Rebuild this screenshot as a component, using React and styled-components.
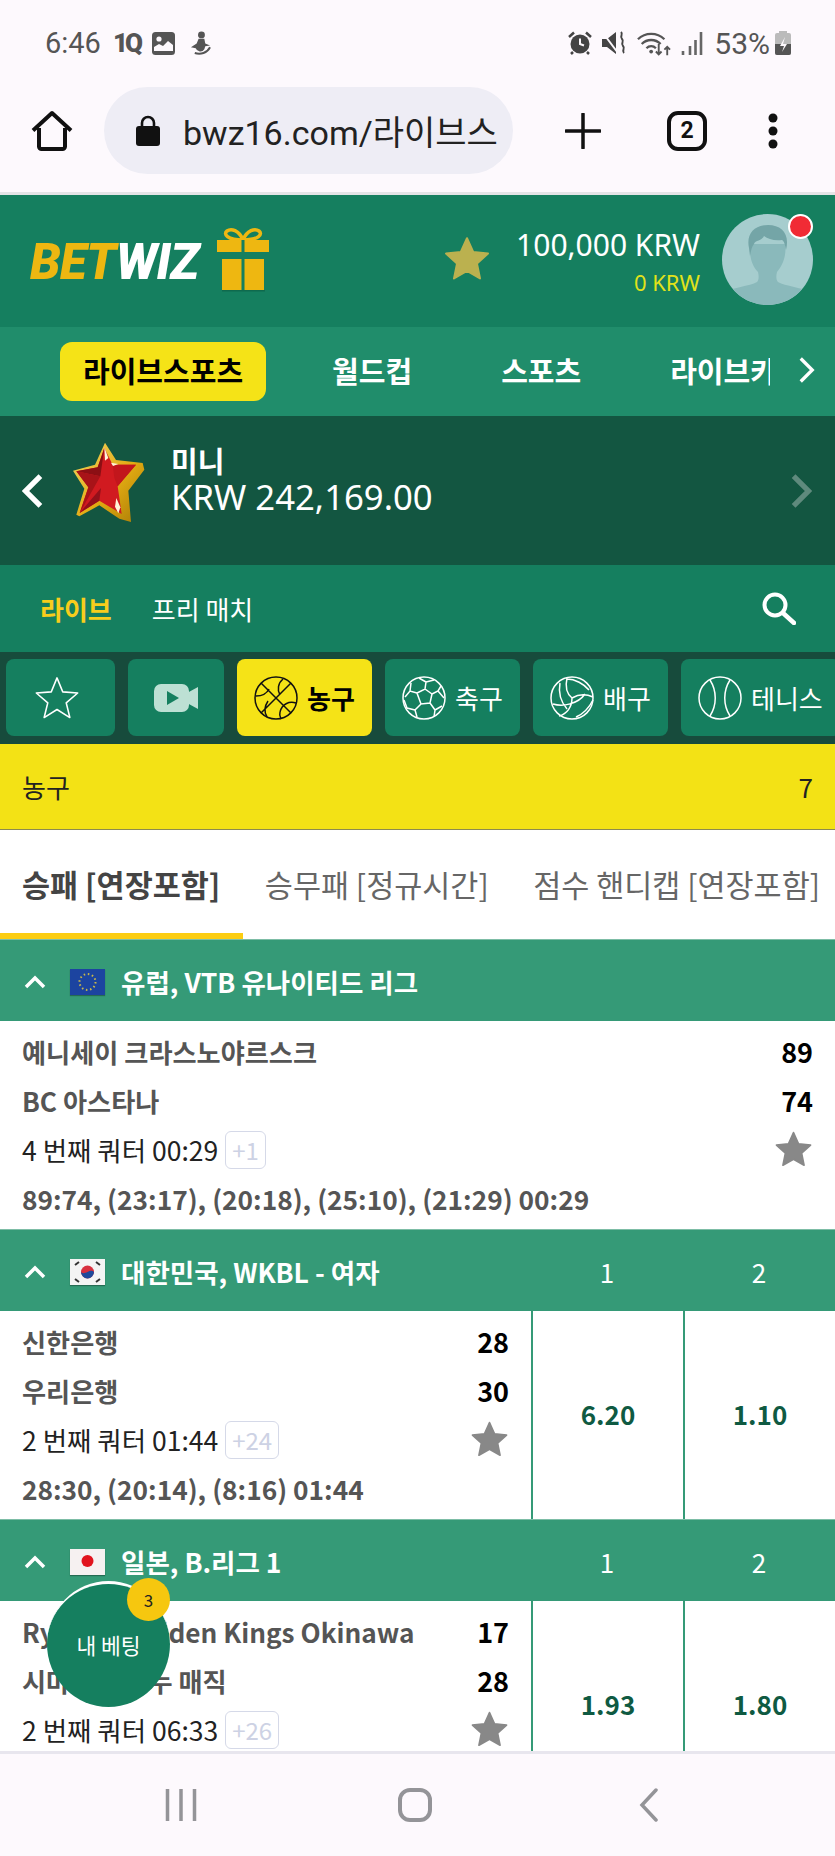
import React from 'react'
import styled, { createGlobalStyle } from 'styled-components'

const GlobalStyle = createGlobalStyle`
  html, body {
    margin: 0;
    padding: 0;
    background: #fff;
  }
  * {
    box-sizing: border-box;
  }
`;

const Phone = styled.div`
  width: 835px;
  height: 1856px;
  display: flex;
  flex-direction: column;
  overflow: hidden;
  position: relative;
  font-family: "Noto Sans CJK KR", "Noto Sans", sans-serif;
`;

/* android + chrome */
const Chrome = styled.div`
  height: 195px;
  flex: none;
  background: #fdf9fd;
  border-bottom: 3px solid #e3e4e6;
`;

const StatusBar = styled.div`
  height: 87px;
  padding: 0 44px 0 45px;
  display: flex;
  align-items: flex-start;
  justify-content: space-between;
  color: #555;
  font-family: Roboto, sans-serif;
`;

const StatusGroup = styled.div`
  display: flex;
  align-items: center;
  height: 86px;
  gap: ${(p) => p.$gap || 8}px;
`;

const Clock = styled.span`
  font-size: 29px;
`;

const Percent = styled.span`
  font-size: 30px;
  margin: 0 -5px 0 1px;
`;

const OneQ = styled.span`
  font-size: 26px;
  font-weight: 900;
  letter-spacing: -3px;
  font-family: Roboto, sans-serif;
  width: 28px;
  margin-right: -1px;
`;

const BrowserBar = styled.div`
  height: 87px;
  display: flex;
  align-items: center;
  position: relative;
`;

const HomeSlot = styled.div`
  width: 104px;
  display: flex;
  justify-content: center;
`;

const UrlPill = styled.div`
  width: 409px;
  height: 87px;
  border-radius: 44px;
  background: #eeedf5;
  display: flex;
  align-items: center;
  padding-left: 32px;
  gap: 23px;
  overflow: hidden;
`;

const UrlText = styled.span`
  font-family: Roboto, "Noto Sans CJK KR", sans-serif;
  font-size: 34px;
  color: #222;
  white-space: nowrap;
`;

const BrowserActions = styled.div`
  flex: 1;
  display: flex;
  align-items: center;
  padding-left: 52px;
`;

const TabCount = styled.div`
  width: 40px;
  height: 40px;
  margin: 0 59px 0 66px;
  border: 4px solid #111;
  border-radius: 11px;
  display: flex;
  align-items: center;
  justify-content: center;
  font: 700 23px Roboto, sans-serif;
  color: #111;
`;

/* site header */
const Header = styled.div`
  height: 132px;
  flex: none;
  background: #157f5f;
  display: flex;
  align-items: center;
  padding: 0 22px 4px 30px;
`;

const Logo = styled.div`
  font: italic 900 49px Roboto, sans-serif;
  letter-spacing: -0.7px;
  color: #fff;
  margin-right: 17px;
  margin-top: 6px;
  span {
    color: #eeb711;
  }
`;

const Spacer = styled.div`
  flex: 1;
`;

const Balance = styled.div`
  display: flex;
  flex-direction: column;
  align-items: flex-end;
  margin: 9px 22px 0 25px;
`;

const BalanceMain = styled.div`
  font: 400 30px/37px "Noto Sans", sans-serif;
  color: #fff;
`;

const BalanceSub = styled.div`
  font: 400 22px/38px "Noto Sans", sans-serif;
  color: #e1e21a;
`;

const AvatarWrap = styled.div`
  position: relative;
  width: 91px;
  height: 91px;
  flex: none;
`;

const Dot = styled.div`
  position: absolute;
  top: 0;
  right: 0;
  width: 25px;
  height: 25px;
  border-radius: 50%;
  background: #f12b35;
  border: 2px solid #fff;
`;

const MainNav = styled.div`
  height: 89px;
  flex: none;
  background: #208d6b;
  display: flex;
  align-items: center;
  padding-left: 60px;
  gap: 43px;
  position: relative;
  overflow: hidden;
`;

const NavItem = styled.div`
  height: 59px;
  flex: none;
  padding: 0 23px 3px;
  border-radius: 12px;
  display: flex;
  align-items: center;
  font-size: 29px;
  font-weight: 700;
  white-space: nowrap;
  color: ${(p) => (p.$active ? '#000' : '#fff')};
  background: ${(p) => (p.$active ? '#f5e317' : 'transparent')};
`;

const NavNext = styled.div`
  position: absolute;
  right: 0;
  top: 0;
  bottom: 0;
  width: 65px;
  background: #208d6b;
  display: flex;
  align-items: center;
  justify-content: center;
  padding-left: 8px;
  padding-bottom: 3px;
`;

const Promo = styled.div`
  height: 149px;
  flex: none;
  background: #135641;
  display: flex;
  align-items: flex-start;
  padding: 0 23px 0 22px;
`;

const PromoBadge = styled.div`
  margin: 26px 24px 0 28px;
  display: flex;
`;

const PromoText = styled.div`
  color: #fff;
  margin-top: 25px;
`;

const PromoName = styled.div`
  font-size: 29px;
  line-height: 38px;
  font-weight: 700;
`;

const PromoAmount = styled.div`
  font: 400 34.7px/36px "Noto Sans", sans-serif;
`;

const PromoArrow = styled.div`
  height: 76px;
  margin-top: 37px;
  display: flex;
  align-items: center;
`;

const SubNav = styled.div`
  height: 87px;
  flex: none;
  background: #157f5f;
  display: flex;
  align-items: center;
  padding: 0 39px 0 40px;
  gap: 40px;
`;

const SubLink = styled.div`
  font-size: 26px;
  font-weight: ${(p) => (p.$active ? 700 : 400)};
  color: ${(p) => (p.$active ? '#f7cd1c' : '#fff')};
`;

const SportBar = styled.div`
  height: 92px;
  flex: none;
  background: #174b3c;
  display: flex;
  align-items: center;
  gap: 13px;
  padding: 0 0 1px 6px;
  overflow: hidden;
`;

const SportTab = styled.div`
  width: ${(p) => p.$w}px;
  height: 77px;
  flex: none;
  border-radius: 8px;
  background: ${(p) => (p.$active ? '#f5e317' : '#157f5f')};
  color: ${(p) => (p.$active ? '#000' : '#fff')};
  font-size: 26px;
  font-weight: ${(p) => (p.$active ? 700 : 400)};
  display: flex;
  align-items: center;
  justify-content: ${(p) => (p.$center ? 'center' : 'flex-start')};
  padding-left: ${(p) => (p.$center ? 0 : 17)}px;
  padding-right: ${(p) => p.$pr || 0}px;
  gap: 9px;
  white-space: nowrap;
`;

const SportTitle = styled.div`
  height: 86px;
  flex: none;
  background: #f3e215;
  border-bottom: 1px solid #8c8a4e;
  display: flex;
  align-items: center;
  justify-content: space-between;
  padding: 0 22px;
  font-size: 26px;
  color: #222;
`;

const MarketTabs = styled.div`
  height: 109px;
  flex: none;
  background: #fff;
  display: flex;
  padding-left: 22px;
  gap: 44.5px;
  white-space: nowrap;
  position: relative;
`;

const MarketTab = styled.div`
  height: 109px;
  padding-top: 34px;
  font-size: 30.5px;
  line-height: 40px;
  color: ${(p) => (p.$active ? '#444' : '#666')};
  font-weight: ${(p) => (p.$active ? 700 : 400)};
`;

const MarketLine = styled.div`
  position: absolute;
  left: 0;
  bottom: 0;
  width: 243px;
  height: 6px;
  background: #fccd12;
`;

const Scroll = styled.div`
  flex: 1;
  min-height: 0;
  overflow: hidden;
  background: #fff;
`;

const LeagueHead = styled.div`
  height: 82px;
  background: #359a77;
  border-top: 1px solid #7dbda6;
  display: flex;
  align-items: center;
  padding: 2px 0 0 24px;
  color: #fff;
  font-size: 26.5px;
  font-weight: 700;
`;

const LeagueName = styled.div`
  flex: 1;
  margin-left: 16px;
`;

const FlagBox = styled.div`
  width: 35px;
  height: 26px;
  margin-left: 24px;
  flex: none;
  box-shadow: 0 1px 1px rgba(0, 0, 0, 0.3);
  display: flex;
`;

const ColLabel = styled.div`
  width: 152px;
  text-align: center;
  font-weight: 400;
  font-size: 26px;
`;

const Match = styled.div`
  height: 208px;
  display: flex;
  background: #fff;
`;

const MatchInfo = styled.div`
  flex: 1;
  padding: 6px 22px 0;
  display: flex;
  flex-direction: column;
`;

const Line = styled.div`
  height: 49px;
  display: flex;
  align-items: center;
  justify-content: space-between;
  white-space: nowrap;
`;

const Team = styled.span`
  font-size: 26.2px;
  font-weight: 700;
  color: #555;
`;

const Score = styled.span`
  font-size: 27px;
  font-weight: 700;
  color: #000;
`;

const Period = styled.span`
  font-size: 26.500px;
  color: #222;
  display: flex;
  align-items: center;
  gap: 7px;
`;

const More = styled.span`
  height: 38px;
  padding: 0 6px;
  border: 1.5px solid #d5d9e8;
  border-radius: 6px;
  color: #cdd2e4;
  font-size: 24px;
  display: flex;
  align-items: center;
`;

const Result = styled.span`
  font-size: 26.3px;
  font-weight: 700;
  color: #555;
`;

const OddCell = styled.div`
  width: 152px;
  flex: none;
  border-left: 2px solid #359a77;
  display: flex;
  align-items: center;
  justify-content: center;
  padding-bottom: 3px;
  font-size: 26px;
  font-weight: 700;
  color: #0f5a42;
`;

const BottomNav = styled.div`
  height: 105px;
  flex: none;
  background: #fdf9fd;
  border-top: 3px solid #e8e6ee;
  display: grid;
  grid-template-columns: repeat(3, 234px);
  justify-items: center;
  align-items: center;
  padding-left: 64px;
`;

const BetButton = styled.div`
  position: absolute;
  left: 47px;
  top: 1581px;
  width: 123px;
  height: 126px;
  border-radius: 50%;
  background: #157f5f;
  border-top: 3px solid #fff;
  color: #fff;
  font-size: 21.500px;
  display: flex;
  align-items: center;
  justify-content: center;
  padding-bottom: 2px;
`;

const BetCount = styled.div`
  position: absolute;
  right: 0;
  top: -6px;
  width: 43px;
  height: 43px;
  border-radius: 50%;
  background: #f6c70f;
  color: #222;
  font-size: 17px;
  display: flex;
  align-items: center;
  justify-content: center;
`;

const StarPath = "M12 1.6l3.1 6.9 7.4.8-5.5 5 1.5 7.4L12 18l-6.5 3.7L7 14.3l-5.5-5 7.4-.8z";

const Star = ({ size = 39, color = '#888' }) => (
  <svg width={size} height={size} viewBox="0 0 24 24">
    <path d={StarPath} fill={color} stroke={color} strokeWidth="1" strokeLinejoin="round" />
  </svg>
);

const Chevron = ({ dir = 'right', color = '#fff', w = 20, h = 34, sw = 5 }) => (
  <svg width={w} height={h} viewBox="0 0 20 34">
    <path
      d={dir === 'right' ? 'M3 3l14 14L3 31' : 'M17 3L3 17l14 14'}
      fill="none"
      stroke={color}
      strokeWidth={sw}
    />
  </svg>
);

const HomeIcon = () => (
  <svg width="42" height="42" viewBox="0 0 42 42">
    <path d="M2 20.5L21 3l19 17.5M8 18v18.5a2.5 2.5 0 0 0 2.5 2.5h21a2.5 2.5 0 0 0 2.5-2.5V18" fill="none" stroke="#111" strokeWidth="4" strokeLinejoin="round" />
  </svg>
);

const LockIcon = () => (
  <svg width="24" height="32" viewBox="0 0 24 32">
    <path d="M6 13V8a6 6 0 0 1 12 0v5" fill="none" stroke="#111" strokeWidth="2.6" />
    <rect x="0" y="11" width="24" height="20" rx="3" fill="#111" />
  </svg>
);

const PlusIcon = () => (
  <svg width="36" height="36" viewBox="0 0 36 36">
    <path d="M18 1v34M1 18h34" stroke="#111" strokeWidth="3.5" strokeLinecap="round" />
  </svg>
);

const DotsIcon = () => (
  <svg width="14" height="36" viewBox="0 0 14 36">
    <circle cx="7" cy="5" r="4.5" fill="#111" />
    <circle cx="7" cy="18" r="4.5" fill="#111" />
    <circle cx="7" cy="31" r="4.5" fill="#111" />
  </svg>
);

const GalleryIcon = () => (
  <svg width="23" height="23" viewBox="0 0 23 23">
    <rect x="0" y="0" width="23" height="23" rx="3.5" fill="#555" />
    <circle cx="7" cy="7" r="2.6" fill="#fdf9fd" />
    <path d="M2 19v-4l5-3 4 2 5-5 5 4v6z" fill="#fdf9fd" />
  </svg>
);

const FigureIcon = () => (
  <svg width="21" height="24" viewBox="0 0 22 25" style={{ marginLeft: 3 }}>
    <circle cx="12" cy="4" r="3.6" fill="#555" />
    <path d="M9 8h6l1 5 5 2-5 1-1 3a5 5 0 0 1-9-1l-5-1 6-4z" fill="#555" />
    <path d="M5 23c6 2 13 0 16-6" fill="none" stroke="#555" strokeWidth="2" />
  </svg>
);

const AlarmIcon = () => (
  <svg width="24" height="24" viewBox="0 0 24 24">
    <circle cx="12" cy="13" r="9.5" fill="#444" />
    <path d="M12 7.5V13l4 1.5" fill="none" stroke="#fdf9fd" strokeWidth="2" />
    <path d="M1 6l5-4.5M23 6l-5-4.5M5 21l-2 2M19 21l2 2" stroke="#444" strokeWidth="2.5" />
  </svg>
);

const MuteIcon = () => (
  <svg width="25" height="24" viewBox="0 0 25 24">
    <path d="M0 8h5l9-7v22l-9-7H0z" fill="#444" />
    <path d="M1 2l15 20" stroke="#fdf9fd" strokeWidth="2" />
    <path d="M19 1c3 3-2 4 1 7s-2 4 1 7-2 4 1 7" fill="none" stroke="#444" strokeWidth="2" />
  </svg>
);

const WifiIcon = () => (
  <svg width="34" height="27" viewBox="0 0 36 27">
    <path d="M1 9a20 20 0 0 1 28 0M5 14a14 14 0 0 1 20 0M10 18.500a7 7 0 0 1 10 0" fill="none" stroke="#555" strokeWidth="2.4" />
    <circle cx="15" cy="22" r="2" fill="#555" />
    <path d="M23 14v11m-3-3l3 3 3-3M32 26V17m-3 3l3-3 3 3" fill="none" stroke="#555" strokeWidth="2" />
  </svg>
);

const SignalIcon = () => (
  <svg width="22" height="23" viewBox="0 0 22 23">
    <path d="M2 19v4M9 14v9M14.500 8v15M20 0v23" stroke="#666" strokeWidth="2.6" />
  </svg>
);

const BatteryIcon = () => (
  <svg width="16" height="24" viewBox="0 0 16 24">
    <rect x="4" y="0" width="8" height="3" fill="#bbb" />
    <rect x="0" y="2" width="16" height="22" rx="2" fill="#bbb" />
    <path d="M0 13h16v9a2 2 0 0 1-2 2H2a2 2 0 0 1-2-2z" fill="#555" />
    <path d="M10 6l-5 9h4l-2 6 5-8H8z" fill="#fdf9fd" />
  </svg>
);

const GiftIcon = () => (
  <svg width="54" height="65" viewBox="0 0 54 65">
    <path d="M27 13C23 3 15 1 11 4s0 9 16 9c16 0 20-6 16-9s-12-1-16 9z" fill="none" stroke="#eeb711" strokeWidth="3.500" />
    <rect x="1" y="13" width="52" height="12" fill="#eeb711" />
    <rect x="6" y="32" width="19.500" height="31" fill="#eeb711" />
    <rect x="28.500" y="32" width="19.500" height="31" fill="#eeb711" />
    <rect x="25.500" y="13" width="3" height="12" fill="#157f5f" />
    <rect x="6" y="63" width="43" height="1.500" fill="#0f6a4e" />
  </svg>
);

const AvatarIcon = () => (
  <svg width="91" height="91" viewBox="0 0 91 91">
    <defs>
      <clipPath id="avatarClip">
        <circle cx="45.500" cy="45.500" r="45.500" />
      </clipPath>
    </defs>
    <g clipPath="url(#avatarClip)">
      <rect width="91" height="91" fill="#a6cdce" />
      <path d="M0 78C10 74 28 72 35 68 37 66 37 62 36 58 30 52 27 42 28 30L63 30C65 42 60 52 55 58 54 62 54 66 56 68 63 72 80 74 91 78V91H0Z" fill="#8ab9bb" />
      <path d="M27 34C24 20 32 11 46 11 60 11 68 20 64 36 63 30 62 27 60 26 52 27 46 25 42 22 40 27 33 26 32 30 30 32 29 36 28 42Z" fill="#74a5a7" />
    </g>
  </svg>
);

const RedStar = () => (
  <svg width="75" height="82" viewBox="213 32 225 246">
    <defs>
      <linearGradient id="goldEdge" x1="0" y1="0" x2="1" y2="1">
        <stop offset="0" stopColor="#f3d766" />
        <stop offset="0.55" stopColor="#e2ab12" />
        <stop offset="1" stopColor="#a87a06" />
      </linearGradient>
    </defs>
    <path d="M312 34L345 86 425 95 430 115 382 178 390 272 355 262 295 222 235 255 226 250 250 172 216 118 282 100Z" fill="url(#goldEdge)" />
    <path d="M310 50L335 100 405 100 350 165 362 248 295 208 236 245 262 168 226 120 290 108Z" fill="#d11a20" />
    <path d="M310 50L290 108 226 120 298 135Z" fill="#8c0f14" />
    <path d="M226 120L262 168 236 245 298 135Z" fill="#a81318" />
    <path d="M236 245L295 208 300 170Z" fill="#94101a" />
    <path d="M405 100L335 100 340 140 350 165Z" fill="#c2161c" />
    <path d="M310 48L322 80 312 88Z" fill="#fff5d8" />
    <path d="M330 94L352 98 336 104Z" fill="#fff5d8" />
    <path d="M346 200L358 228 352 246 342 226Z" fill="#fff5d8" />
  </svg>
);

const SearchIcon = () => (
  <svg width="34" height="33" viewBox="0 0 34 33">
    <circle cx="13" cy="13" r="10.500" fill="none" stroke="#fff" strokeWidth="4" />
    <path d="M21 21l11 10" stroke="#fff" strokeWidth="4.500" strokeLinecap="round" />
  </svg>
);

const OutlineStar = () => (
  <svg width="46" height="46" viewBox="0 0 24 24">
    <path d="M12 1.500l3 7.300 7.800.6-6 5.100 1.900 7.700L12 18l-6.700 4.200 1.900-7.700-6-5.100 7.800-.6z" fill="none" stroke="#fff" strokeWidth="0.800" strokeLinejoin="round" />
  </svg>
);

const VideoIcon = () => (
  <svg width="44" height="28" viewBox="0 0 44 28">
    <rect x="0" y="0" width="35" height="28" rx="7" fill="#bde0d4" />
    <path d="M33 9l11-6v22l-11-6z" fill="#bde0d4" />
    <path d="M13 7l12 7-12 7z" fill="#157f5f" />
  </svg>
);

const Basketball = () => (
  <svg width="44" height="44" viewBox="0 0 44 44" fill="none" stroke="#111" strokeWidth="1.500">
    <circle cx="22" cy="22" r="21" />
    <path d="M7 7l30 30M37 7L7 37M2 20c6 0 11-3 13-7M29 3c-5 4-6 11-3 16M42 27c-7-2-14 1-16 9-1 3 0 5 1 7M13 41c-3-5-3-10 1-16" />
  </svg>
);

const Soccer = () => (
  <svg width="44" height="44" viewBox="0 0 44 44" fill="none" stroke="#fff" strokeWidth="1.500">
    <circle cx="22" cy="22" r="21" />
    <path d="M15 17l8-4 7 5-2 9-9 1zM23 13l1-7-7-4M24 6l8-2M30 18l6-3 3-5M36 15l6 7M28 27l5 7-1 7M33 34l7-4M19 28l-6 6 2 7M13 34l-8-2-3-8M15 17l-7-2-5 6M8 15l1-8" />
  </svg>
);

const Volleyball = () => (
  <svg width="44" height="44" viewBox="0 0 44 44" fill="none" stroke="#fff" strokeWidth="1.500">
    <circle cx="22" cy="22" r="21" />
    <path d="M22 22c-5-4-7-11-5-20M22 22c7-4 14-4 21-1M22 22c0 9-5 16-13 18M17 3c8 0 17 5 22 11M10 7c-2 11 1 19 7 26M3 28c10 3 25 0 32-10M43 24c-4 8-10 14-17 17" />
  </svg>
);

const Tennis = () => (
  <svg width="44" height="44" viewBox="0 0 44 44" fill="none" stroke="#fff" strokeWidth="1.500">
    <circle cx="22" cy="22" r="21" />
    <path d="M12 4c7 11 7 25 0 36M32 4c-7 11-7 25 0 36" />
  </svg>
);

const EuFlag = () => (
  <svg width="35" height="26" viewBox="0 0 35 26">
    <rect width="35" height="26" fill="#1c44a0" />
    <circle cx="17.500" cy="13" r="8" fill="none" stroke="#c9b84a" strokeWidth="2" strokeDasharray="1.500 2.700" />
  </svg>
);

const KoreaFlag = () => (
  <svg width="35" height="26" viewBox="0 0 35 26">
    <rect width="35" height="26" fill="#f4f4f4" />
    <circle cx="17.500" cy="13" r="6.500" fill="#d8303f" />
    <path d="M11 13a6.500 6.500 0 0 0 13 0c-2-2-4-1-6.500 0s-4.500 2-6.500 0z" fill="#1f4a9c" />
    <path d="M5 6l4-3M26 3l4 3M5 20l4 3M26 23l4-3" stroke="#333" strokeWidth="2" />
  </svg>
);

const JapanFlag = () => (
  <svg width="35" height="26" viewBox="0 0 35 26">
    <rect width="35" height="26" fill="#f6f1f1" />
    <circle cx="17.500" cy="12" r="6" fill="#e1141e" />
  </svg>
);

const MenuBars = () => (
  <svg width="32" height="32" viewBox="0 0 32 32">
    <path d="M2.500 0v32M16 0v32M29.500 0v32" stroke="#949498" strokeWidth="3.500" strokeLinecap="round" />
  </svg>
);

const HomeSquare = () => (
  <svg width="34" height="34" viewBox="0 0 34 34">
    <rect x="2" y="2" width="30" height="30" rx="10" fill="none" stroke="#949498" strokeWidth="4" />
  </svg>
);

const BackArrow = () => (
  <svg width="20" height="34" viewBox="0 0 20 34">
    <path d="M17 2L3 17l14 15" fill="none" stroke="#949498" strokeWidth="3.500" strokeLinecap="round" />
  </svg>
);

const ChevronUp = () => (
  <svg width="22" height="14" viewBox="0 0 22 14">
    <path d="M2 12l9-9 9 9" fill="none" stroke="#fff" strokeWidth="3.500" />
  </svg>
);

const matches = [
  {
    league: '유럽, VTB 유나이티드 리그',
    flag: <EuFlag />,
    home: '예니세이 크라스노야르스크',
    away: 'BC 아스타나',
    homeScore: 89,
    awayScore: 74,
    period: '4 번째 쿼터 00:29',
    more: '+1',
    result: '89:74, (23:17), (20:18), (25:10), (21:29) 00:29',
  },
  {
    league: '대한민국, WKBL - 여자',
    flag: <KoreaFlag />,
    home: '신한은행',
    away: '우리은행',
    homeScore: 28,
    awayScore: 30,
    period: '2 번째 쿼터 01:44',
    more: '+24',
    result: '28:30, (20:14), (8:16) 01:44',
    odds: ['6.20', '1.10'],
  },
  {
    league: '일본, B.리그 1',
    flag: <JapanFlag />,
    home: 'Ryukyu Golden Kings Okinawa',
    away: '시마네 스사누 매직',
    homeScore: 17,
    awayScore: 28,
    period: '2 번째 쿼터 06:33',
    more: '+26',
    odds: ['1.93', '1.80'],
  },
];

const App = () => {
  return (
    <Phone>
      <GlobalStyle />
      <Chrome>
        <StatusBar>
          <StatusGroup $gap={12}>
            <Clock>6:46</Clock>
            <OneQ>1Q</OneQ>
            <GalleryIcon />
            <FigureIcon />
          </StatusGroup>
          <StatusGroup $gap={10}>
            <AlarmIcon />
            <MuteIcon />
            <WifiIcon />
            <SignalIcon />
            <Percent>53%</Percent>
            <BatteryIcon />
          </StatusGroup>
        </StatusBar>
        <BrowserBar>
          <HomeSlot>
            <HomeIcon />
          </HomeSlot>
          <UrlPill>
            <LockIcon />
            <UrlText>bwz16.com/라이브스</UrlText>
          </UrlPill>
          <BrowserActions>
            <PlusIcon />
            <TabCount>2</TabCount>
            <DotsIcon />
          </BrowserActions>
        </BrowserBar>
      </Chrome>

      <Header>
        <Logo>
          <span>BET</span>WIZ
        </Logo>
        <GiftIcon />
        <Spacer />
        <Star size={48} color="#bbb14f" />
        <Balance>
          <BalanceMain>100,000 KRW</BalanceMain>
          <BalanceSub>0 KRW</BalanceSub>
        </Balance>
        <AvatarWrap>
          <AvatarIcon />
          <Dot />
        </AvatarWrap>
      </Header>

      <MainNav>
        <NavItem $active>라이브스포츠</NavItem>
        <NavItem>월드컵</NavItem>
        <NavItem>스포츠</NavItem>
        <NavItem>라이브카지노</NavItem>
        <NavNext>
          <Chevron w={17} h={28} sw={4} />
        </NavNext>
      </MainNav>

      <Promo>
        <PromoArrow>
          <Chevron dir="left" w={22} h={36} />
        </PromoArrow>
        <PromoBadge>
          <RedStar />
        </PromoBadge>
        <PromoText>
          <PromoName>미니</PromoName>
          <PromoAmount>KRW 242,169.00</PromoAmount>
        </PromoText>
        <Spacer />
        <PromoArrow>
          <Chevron color="#5f8a7d" w={22} h={36} />
        </PromoArrow>
      </Promo>

      <SubNav>
        <SubLink $active>라이브</SubLink>
        <SubLink>프리 매치</SubLink>
        <Spacer />
        <SearchIcon />
      </SubNav>

      <SportBar>
        <SportTab $w={109} $center $pr={8}><OutlineStar /></SportTab>
        <SportTab $w={96} $center><VideoIcon /></SportTab>
        <SportTab $w={135} $active><Basketball />농구</SportTab>
        <SportTab $w={135}><Soccer />축구</SportTab>
        <SportTab $w={135}><Volleyball />배구</SportTab>
        <SportTab $w={160}><Tennis />테니스</SportTab>
      </SportBar>

      <SportTitle>
        <span>농구</span>
        <span>7</span>
      </SportTitle>

      <MarketTabs>
        <MarketTab $active>승패 [연장포함]</MarketTab>
        <MarketTab>승무패 [정규시간]</MarketTab>
        <MarketTab>점수 핸디캡 [연장포함]</MarketTab>
        <MarketLine />
      </MarketTabs>

      <Scroll>
        {matches.map((m) => (
          <div key={m.league}>
            <LeagueHead>
              <ChevronUp />
              <FlagBox>{m.flag}</FlagBox>
              <LeagueName>{m.league}</LeagueName>
              {m.odds && <ColLabel>1</ColLabel>}
              {m.odds && <ColLabel>2</ColLabel>}
            </LeagueHead>
            <Match>
              <MatchInfo>
                <Line>
                  <Team>{m.home}</Team>
                  <Score>{m.homeScore}</Score>
                </Line>
                <Line>
                  <Team>{m.away}</Team>
                  <Score>{m.awayScore}</Score>
                </Line>
                <Line>
                  <Period>
                    {m.period}
                    <More>{m.more}</More>
                  </Period>
                  <Star />
                </Line>
                {m.result && (
                  <Line>
                    <Result>{m.result}</Result>
                  </Line>
                )}
              </MatchInfo>
              {m.odds && <OddCell>{m.odds[0]}</OddCell>}
              {m.odds && <OddCell>{m.odds[1]}</OddCell>}
            </Match>
          </div>
        ))}
      </Scroll>

      <BottomNav>
        <MenuBars />
        <HomeSquare />
        <BackArrow />
      </BottomNav>

      <BetButton>
        내 베팅
        <BetCount>3</BetCount>
      </BetButton>
    </Phone>
  );
};

export default App
